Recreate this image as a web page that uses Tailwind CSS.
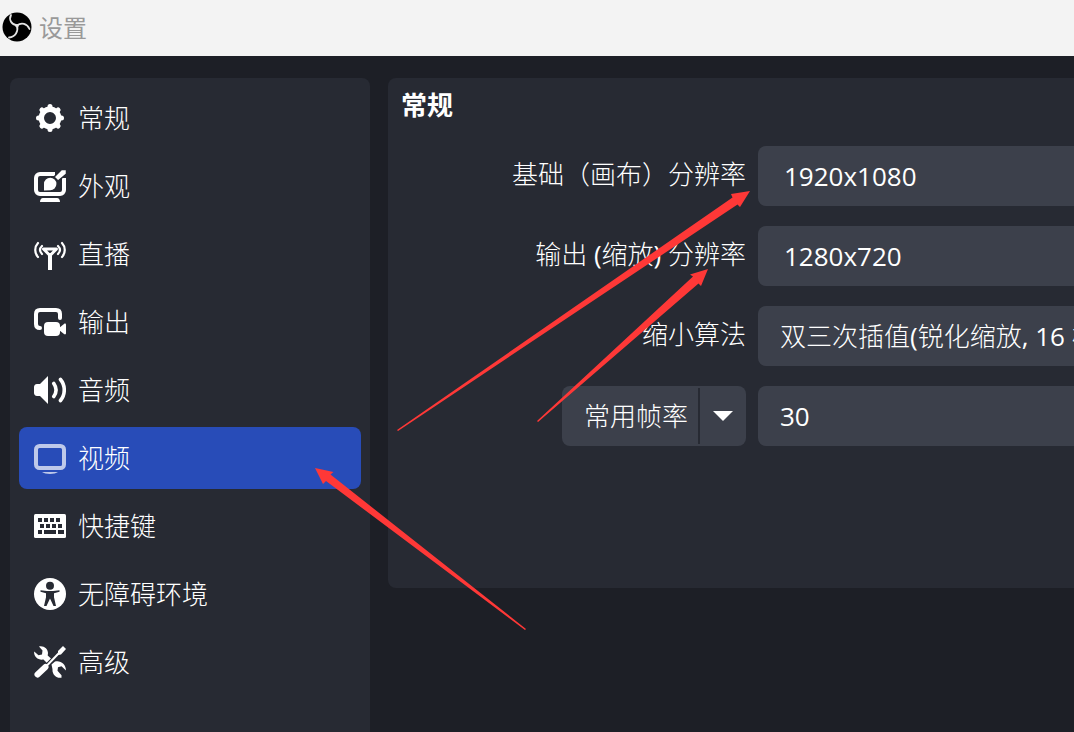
<!DOCTYPE html>
<html lang="zh-CN">
<head>
<meta charset="utf-8">
<title>设置</title>
<meta name="viewport" content="width=device-width, initial-scale=1">
<script src="https://cdn.jsdelivr.net/npm/@tailwindcss/browser@4"></script>
</head>
<body class="relative flex h-screen flex-col overflow-hidden bg-[#1d1f26] font-['Open_Sans','Noto_Sans_CJK_SC_Light','Noto_Sans_CJK_SC',sans-serif] text-[26px] leading-8 text-white">
<header class="flex h-14 shrink-0 items-center gap-[7px] bg-[#f3f3f3] px-0.5 pb-0.5 text-2xl text-[#999]">
  <svg class="size-[30px]" viewBox="0 0 30 30" aria-hidden="true">
    <circle cx="15" cy="15" r="14.500" fill="#000"/>
    <path d="M9 3C6.500 8 9.500 12.500 15 13.500M27.500 17C25 11.500 19.500 10 15 13.500M7 25.500C13.500 25 16.500 19.500 15 13.500" fill="none" stroke="#e4e4e4" stroke-width="1.800" stroke-linecap="round"/>
    <circle cx="15" cy="13.800" r="1.800" fill="#e4e4e4"/>
  </svg>
  <h1 class="font-['Noto_Sans_CJK_SC',sans-serif]">设置</h1>
</header>
<div class="flex min-h-0 flex-1 gap-[18px] pt-[22px] pl-2.5">
  <nav class="flex w-[360px] shrink-0 flex-col gap-1.5 rounded-t-lg bg-[#272a33] p-[9px]">
    <a href="#general" class="flex h-[62px] items-center gap-3 rounded-lg px-[15px]">
      <svg class="size-8" viewBox="0 0 32 32" aria-hidden="true" fill="none" stroke="#fff">
        <circle cx="16" cy="16" r="8.700" stroke-width="5.400"/>
        <path stroke-width="5" stroke-linecap="round" d="M16 4.500v3M16 24.500v3M4.500 16h3M24.500 16h3M7.900 7.900l2 2M22.100 22.100l2 2M24.100 7.900l-2 2M9.900 22.100l-2 2"/>
      </svg>常规</a>
    <a href="#appearance" class="flex h-[62px] items-center gap-3 rounded-lg px-[15px]">
      <svg class="size-8" viewBox="0 0 32 32" aria-hidden="true" fill="#fff">
        <path fill="none" stroke="#fff" stroke-width="4" d="M21 4H6a4 4 0 0 0-4 4v12a4 4 0 0 0 4 4h20a4 4 0 0 0 4-4V8"/>
        <path d="M10 20.500V14a6.200 6.200 0 1 1 6.200 6.200z"/>
        <path stroke="#272a33" stroke-width="1.500" d="M32.500-.500h-5L20 7l4 4 8.500-7z"/>
        <path d="M6 32c0-2 1-4 3-4h14c2 0 3 2 3 4z"/>
      </svg>外观</a>
    <a href="#stream" class="flex h-[62px] items-center gap-3 rounded-lg px-[15px]">
      <svg class="size-8" viewBox="0 0 32 32" aria-hidden="true" fill="none" stroke="#fff">
        <path stroke-width="2.200" stroke-linecap="round" d="M4 5C.300 9 .300 15 4 19M8 8c-2.500 2.500-2.500 5.500 0 8M28 5c3.700 4 3.700 10 0 14M24 8c2.500 2.500 2.500 5.500 0 8"/>
        <path stroke-width="3" stroke-linejoin="round" d="M9.500 11h13L16 17.500z"/>
        <path stroke-width="4" d="M16 17v15"/>
      </svg>直播</a>
    <a href="#output" class="flex h-[62px] items-center gap-3 rounded-lg px-[15px]">
      <svg class="size-8" viewBox="0 0 32 32" aria-hidden="true" fill="#fff">
        <path fill="none" stroke="#fff" stroke-width="4" stroke-linecap="round" d="M6 22c-2.500 0-4-1.500-4-4V8c0-2.500 1.500-4 4-4h16c2.500 0 4 1.500 4 4v4"/>
        <rect x="10" y="16" width="16" height="14" rx="4"/>
        <path d="M25 22l5-4c1-.800 2-.500 2 1v8c0 1.500-1 1.800-2 1l-5-4z"/>
      </svg>输出</a>
    <a href="#audio" class="flex h-[62px] items-center gap-3 rounded-lg px-[15px]">
      <svg class="size-8" viewBox="0 0 32 32" aria-hidden="true" fill="#fff">
        <path d="M3 10h3l8-8v28l-8-8H3c-2 0-3-1.500-3-3v-6c0-1.500 1-3 3-3z"/>
        <path fill="none" stroke="#fff" stroke-width="3.600" stroke-linecap="round" d="M19.800 9.500c2.800 4 2.800 9 0 13M26.500 5.500c5 6 5 15 0 21"/>
      </svg>音频</a>
    <a href="#video" aria-current="page" class="flex h-[62px] items-center gap-3 rounded-lg bg-[#284cb8] px-[15px]">
      <svg class="size-8" viewBox="0 0 32 32" aria-hidden="true" fill="#bec9ea">
        <rect x="2" y="4" width="28" height="22" rx="3.500" fill="none" stroke="#bec9ea" stroke-width="4"/>
        <path d="M8 30h16c-3 2.500-13 2.500-16 0z"/>
      </svg>视频</a>
    <a href="#hotkeys" class="flex h-[62px] items-center gap-3 rounded-lg px-[15px]">
      <svg class="size-8" viewBox="0 0 32 32" aria-hidden="true">
        <rect y="4" width="32" height="24" rx="1.500" fill="#fff"/>
        <path fill="#272a33" d="M4 8h4v4H4zM10 8h4v4h-4zM16 8h4v4h-4zM22 8h4v4h-4zM6 14h4v4H6zM12 14h4v4h-4zM18 14h4v4h-4zM24 14h4v4h-4zM4 20h4v4H4zM10 20h12v4H10zM24 20h6v4h-6z"/>
      </svg>快捷键</a>
    <a href="#accessibility" class="flex h-[62px] items-center gap-3 rounded-lg px-[15px]">
      <svg class="size-8" viewBox="0 0 32 32" aria-hidden="true">
        <circle cx="16" cy="16" r="16" fill="#fff"/>
        <circle cx="16" cy="7.800" r="4" fill="#272a33"/>
        <path fill="#272a33" d="M6.500 12.200L13 13h6l6.500-.800v1.600L20 15.300v4L22 28h-2.500L16 20.500 12.500 28H10l2-8.700v-4l-5.500-1.500z"/>
      </svg>无障碍环境</a>
    <a href="#advanced" class="flex h-[62px] items-center gap-3 rounded-lg px-[15px]">
      <svg class="size-8" viewBox="0 0 32 32" aria-hidden="true" fill="#fff">
        <path d="M5 .500C10 -.500 14 3 14 7l-.300 2.500 3.800 3.500-4.500 4-3.500-3.500C4 14.500-.500 10.500.200 5.500l4.300 3.800L8 8.500l.500-4z"/>
        <path d="M17.500 18.500l3.500-3c5-1.500 11 2 11 9l-4.500-4.300-3.500 1-.500 3.500 4 4.500v2.500c-5 1-9.500-3-9-8.500z"/>
        <path stroke="#272a33" stroke-width="4" d="M12 20.500L24 8"/>
        <path stroke="#fff" stroke-width="2" d="M12 20.500L25 7"/>
        <path d="M24 5l5-5 3 3-5 5.500-3 .500z"/>
        <path stroke="#fff" stroke-width="6" stroke-linecap="round" d="M3.500 28.500l8-7.500"/>
      </svg>高级</a>
  </nav>
  <main class="flex min-w-0 flex-1 flex-col">
    <section class="h-[510px] rounded-l-lg bg-[#272a33] pl-[13px]">
      <h2 class="h-[68px] pt-2.5 font-bold font-['Noto_Sans_CJK_SC',sans-serif]">常规</h2>
      <form class="grid grid-cols-[345px_minmax(0,1fr)] items-center gap-x-3 gap-y-5">
        <label for="base" class="pb-1 text-right">基础（画布）分辨率</label>
        <input id="base" value="1920x1080" class="h-[60px] w-full rounded-l-lg bg-[#3c404b] pl-[26px]">
        <label for="out" class="pb-1 text-right">输出 (缩放) 分辨率</label>
        <input id="out" value="1280x720" class="h-[60px] w-full rounded-l-lg bg-[#3c404b] pl-[26px]">
        <label for="filter" class="pb-1 text-right">缩小算法</label>
        <select id="filter" class="h-[60px] w-full appearance-none rounded-l-lg bg-[#3c404b] pl-[22px]">
          <option>双三次插值(锐化缩放, 16 样本)</option>
        </select>
        <button type="button" class="flex h-[60px] w-[184px] items-center justify-self-end rounded-lg bg-[#3c404b]">
          <span class="flex-1 pl-3 text-center">常用帧率</span>
          <span class="flex h-14 w-12 items-center justify-center border-l-2 border-[#272a33]">
            <svg class="h-2.5 w-5" viewBox="0 0 20 10" aria-hidden="true"><path fill="#fff" d="M0 0h20L10 10z"/></svg>
          </span>
        </button>
        <select aria-label="帧率" class="h-[60px] w-full appearance-none rounded-l-lg bg-[#3c404b] pl-[22px]">
          <option>30</option>
        </select>
      </form>
    </section>
  </main>
</div>
<svg class="pointer-events-none absolute top-0 left-0 h-[732px] w-[1074px]" viewBox="0 0 1074 732" aria-hidden="true" fill="#fe3837">
  <path d="M397 430L732.500 197.500 731 194l19-3-10 16-2.500-2.500L398 431z"/>
  <path d="M537 421L693 276.500 690 274.500l18-5.500-7 17-2.500-2.500L538 422z"/>
  <path d="M526 629L330.500 474.500l3-2.500L315 468l8 16 3-3L525 630z"/>
</svg>
</body>
</html>
